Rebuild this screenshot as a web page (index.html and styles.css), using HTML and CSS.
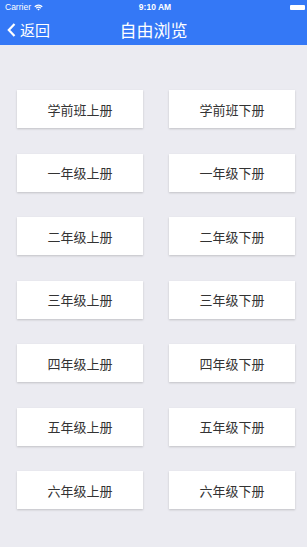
FILE: index.html
```html
<!DOCTYPE html>
<html lang="zh">
<head>
<meta charset="utf-8">
<link rel="stylesheet" href="styles.css">
</head>
<body>
<header class="topbar">
  <div class="status">
    <div class="status-left">
      <span class="carrier">Carrier</span>
      <svg class="wifi" width="9" height="7" viewBox="0 0 9 7">
        <path d="M0.3 2.3 A6 6 0 0 1 8.7 2.3 L7.8 3.2 A4.8 4.8 0 0 0 1.2 3.2 Z" fill="#fff"/>
        <path d="M1.8 3.8 A3.9 3.9 0 0 1 7.2 3.8 L6.3 4.7 A2.6 2.6 0 0 0 2.7 4.7 Z" fill="#fff"/>
        <path d="M3.3 5.3 A1.7 1.7 0 0 1 5.7 5.3 L4.5 6.6 Z" fill="#fff"/>
      </svg>
    </div>
    <div class="status-time">9:10 AM</div>
    <div class="status-right">
      <span class="battery"></span>
    </div>
  </div>
  <nav class="navbar">
    <div class="back">
      <svg class="chev" width="9" height="14" viewBox="0 0 9 14">
        <path d="M7.5 1 L1.8 7 L7.5 13" fill="none" stroke="#fff" stroke-width="2.2"/>
      </svg>
      <span>返回</span>
    </div>
    <div class="title">自由浏览</div>
  </nav>
</header>
<main class="grid">
  <div class="btn">学前班上册</div><div class="btn">学前班下册</div>
  <div class="btn">一年级上册</div><div class="btn">一年级下册</div>
  <div class="btn">二年级上册</div><div class="btn">二年级下册</div>
  <div class="btn">三年级上册</div><div class="btn">三年级下册</div>
  <div class="btn">四年级上册</div><div class="btn">四年级下册</div>
  <div class="btn">五年级上册</div><div class="btn">五年级下册</div>
  <div class="btn">六年级上册</div><div class="btn">六年级下册</div>
</main>
</body>
</html>
```
FILE: styles.css
```css
html, body {
  margin: 0;
  padding: 0;
}
body {
  width: 307px;
  height: 547px;
  background: #ebebf1;
  font-family: "Noto Sans CJK SC", "Noto Sans", "Liberation Sans", sans-serif;
  overflow: hidden;
}
.topbar {
  background: #3478f6;
  color: #fff;
  height: 45px;
}
.status {
  height: 14px;
  display: flex;
  align-items: center;
  justify-content: space-between;
  padding: 0 2px 0 5px;
  font-family: "Liberation Sans", sans-serif;
  font-size: 8.5px;
  position: relative;
}
.status-left {
  display: flex;
  align-items: center;
  gap: 3px;
  width: 60px;
}
.status-time {
  font-weight: bold;
  font-size: 8.5px;
}
.status-right {
  width: 60px;
  display: flex;
  justify-content: flex-end;
}
.battery {
  width: 15px;
  height: 5px;
  background: #fff;
  border-radius: 1px;
}
.navbar {
  height: 31px;
  display: flex;
  align-items: center;
  position: relative;
}
.back {
  display: flex;
  align-items: center;
  gap: 4px;
  padding-left: 7px;
  font-size: 15px;
}
.title {
  position: absolute;
  left: 0;
  right: 0;
  text-align: center;
  font-size: 17px;
  pointer-events: none;
}
.grid {
  display: grid;
  grid-template-columns: 126px 126px;
  column-gap: 26px;
  row-gap: 25.5px;
  padding: 45px 0 0 17px;
}
.btn {
  height: 38px;
  background: #fff;
  box-shadow: 0 1px 2px rgba(0, 0, 0, 0.18);
  display: flex;
  align-items: center;
  justify-content: center;
  font-size: 13px;
  color: #333;
}
```
